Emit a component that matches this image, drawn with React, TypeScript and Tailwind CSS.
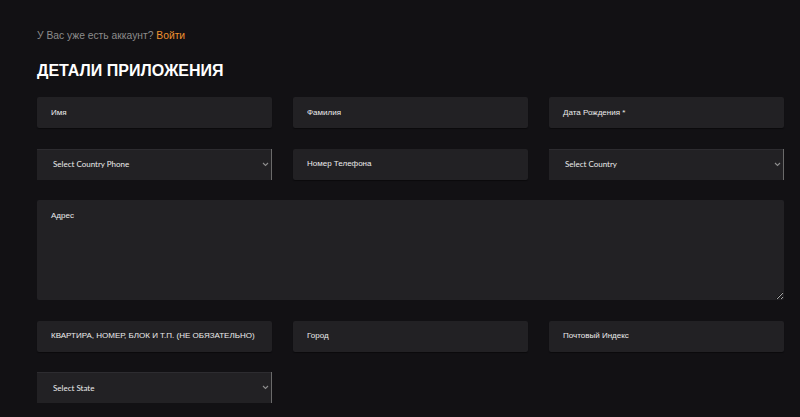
import React from 'react';

const Chevron: React.FC = () => (
  <svg width="7" height="5" viewBox="0 0 7 5" className="text-[#8d8d8d]">
    <path d="M1 1l2.5 2.5L6 1" fill="none" stroke="currentColor" strokeWidth="1.1" />
  </svg>
);

const Field: React.FC<{ label: string; className?: string }> = ({ label, className }) => (
  <div
    className={
      'h-[31px] bg-[#222124] rounded-[2px] flex items-center pl-[14px] text-[8px] text-[#ececec] whitespace-nowrap shadow-[0_1px_1px_rgba(0,0,0,0.4)] ' +
      (className || '')
    }
    style={{ fontFamily: '"Liberation Sans", Arial, sans-serif' }}
  >
    {label}
  </div>
);

const SelectField: React.FC<{ label: string }> = ({ label }) => (
  <div
    className="h-[31px] bg-[#222124] shadow-[inset_0_1px_0_#2d2c30] flex items-center justify-between pl-[16px] text-[8px] text-[#ececec]"
    style={{ fontFamily: 'Lato, "Open Sans", sans-serif' }}
  >
    <span>{label}</span>
    <div className="flex items-center h-full">
      <Chevron />
      <div className="ml-[2px] w-px h-full bg-[#6a6a6a]" />
    </div>
  </div>
);

const App: React.FC = () => {
  return (
    <main className="w-[800px] h-[417px] bg-[#121114] overflow-hidden pl-[37px] pt-[29px]">
      <p
        className="text-[10.3px] leading-[14px] text-[#8c8c8c]"
        style={{ fontFamily: '"Liberation Sans", Arial, sans-serif' }}
      >
        У Вас уже есть аккаунт? <span className="text-[#f0922f]">Войти</span>
      </p>
      <h1
        className="mt-[18px] text-[16px] leading-[20px] font-bold text-white"
        style={{ fontFamily: '"Liberation Sans", Arial, sans-serif' }}
      >
        ДЕТАЛИ ПРИЛОЖЕНИЯ
      </h1>

      <div className="mt-[16px] w-[747px] grid grid-cols-3 gap-x-[21px] gap-y-[20.5px]">
        <Field label="Имя" />
        <Field label="Фамилия" />
        <Field label="Дата Рождения *" />

        <SelectField label="Select Country Phone" />
        <Field label="Номер Телефона" />
        <SelectField label="Select Country" />

        <textarea
          className="col-span-3 h-[100px] bg-[#222124] rounded-[2px] pl-[14px] pt-[10px] text-[8px] text-[#ececec] placeholder:text-[#ececec] outline-none resize-y"
          style={{ fontFamily: '"Liberation Sans", Arial, sans-serif' }}
          placeholder="Адрес"
        />

        <Field label="КВАРТИРА, НОМЕР,  БЛОК И Т.П. (НЕ ОБЯЗАТЕЛЬНО)" />
        <Field label="Город" />
        <Field label="Почтовый Индекс" />

        <SelectField label="Select State" />
      </div>
    </main>
  );
};

export default App;
